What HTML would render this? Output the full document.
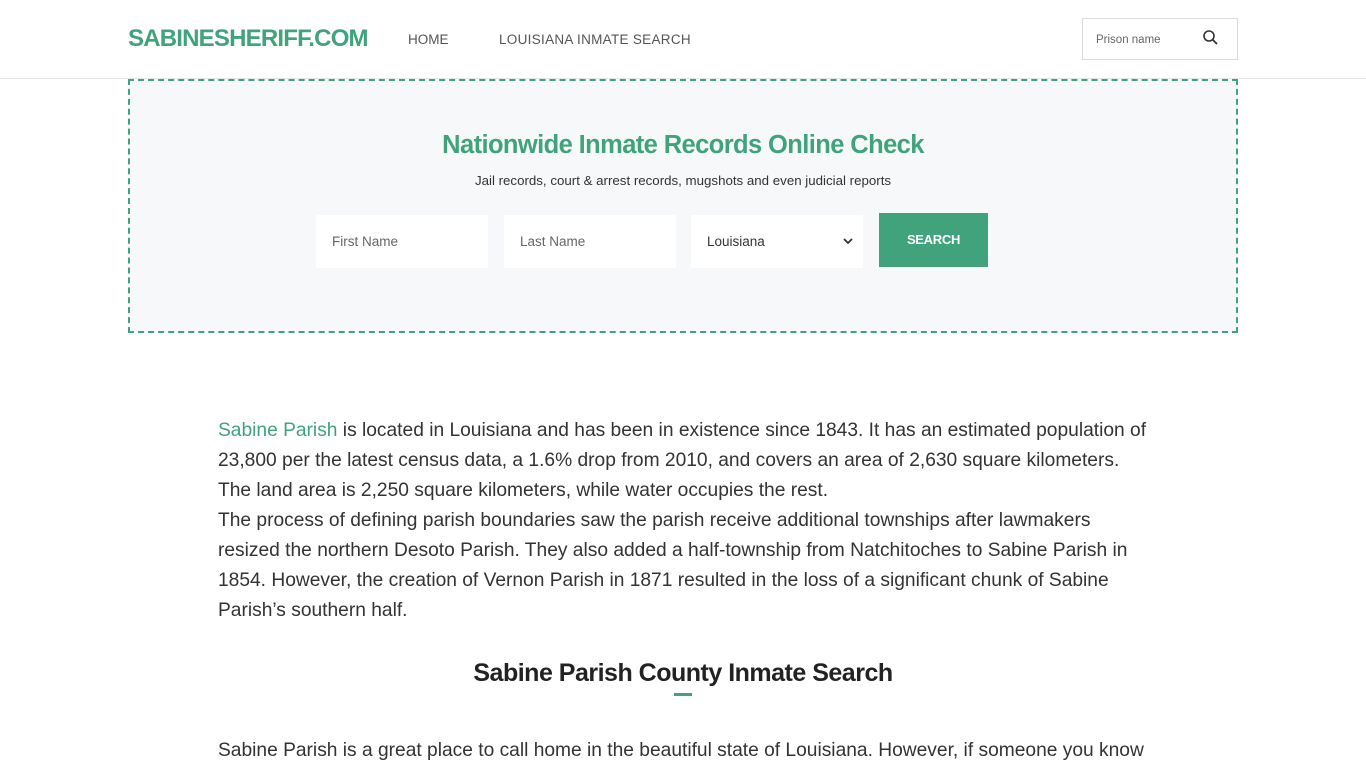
<!DOCTYPE html>
<html><head><meta charset="utf-8"><style>
*{box-sizing:border-box;margin:0;padding:0}
body{width:1366px;height:768px;overflow:hidden;background:#fff;font-family:"Liberation Sans",sans-serif;color:#333}
.hdr{height:79px;border-bottom:1px solid #e6e6e6;position:relative}
.logo{position:absolute;left:128px;top:25px;font-size:24px;font-weight:bold;color:#40a37c;letter-spacing:-0.8px}
.nav{position:absolute;top:32px;font-size:13.5px;color:#555;letter-spacing:0}
.sbox{position:absolute;left:1082px;top:18px;width:156px;height:42px;border:1px solid #ddd;font-size:11.5px;color:#666;padding:15px 0 0 13px}
.box{position:absolute;left:128px;top:79px;width:1110px;height:254px;border:2px dashed #40a37c;background:#f6f8f9}
h1{position:absolute;top:50px;width:100%;text-align:center;color:#40a37c;font-size:25.5px;font-weight:bold;letter-spacing:-0.6px}
.sub{position:absolute;top:92px;width:100%;text-align:center;font-size:13.3px;color:#333}
.in{position:absolute;top:134px;height:53px;width:172px;background:#fff;font-size:13.5px;color:#666;padding:19px 0 0 16px}
.btn{position:absolute;left:749px;top:132px;width:109px;height:54px;background:#40a37c;color:#fff;font-weight:bold;font-size:13px;text-align:center;padding-top:19px;letter-spacing:-0.3px}
.p{position:absolute;left:218px;top:416px;width:960px;font-size:19.2px;line-height:30px;color:#333;letter-spacing:0}
.p a{color:#40a37c;text-decoration:none}
h2{position:absolute;top:659px;width:100%;text-align:center;font-size:25px;font-weight:bold;color:#222;letter-spacing:-0.5px}
.bar{position:absolute;left:674px;top:693px;width:18px;height:3px;background:#40a37c}
</style></head><body>
<div class="hdr">
<div class="logo">SABINESHERIFF.COM</div>
<div class="nav" style="left:408px">HOME</div>
<div class="nav" style="left:499px;letter-spacing:0.3px">LOUISIANA INMATE SEARCH</div>
<div class="sbox">Prison name
<svg style="position:absolute;left:119px;top:10px" width="17" height="17" viewBox="0 0 17 17"><circle cx="7" cy="7" r="5" fill="none" stroke="#333" stroke-width="1.6"/><path d="M10.7 10.7L15 15" stroke="#333" stroke-width="1.8"/></svg></div>
</div>
<div class="box">
<h1>Nationwide Inmate Records Online Check</h1>
<div class="sub">Jail records, court &amp; arrest records, mugshots and even judicial reports</div>
<div class="in" style="left:186px">First Name</div>
<div class="in" style="left:374px">Last Name</div>
<div class="in" style="left:561px;color:#333">Louisiana<svg style="position:absolute;right:10px;top:23px" width="10" height="7" viewBox="0 0 10 7"><path d="M1 1l4 4 4-4" stroke="#333" stroke-width="1.8" fill="none"/></svg></div>
<div class="btn">SEARCH</div>
</div>
<div class="p"><a>Sabine Parish</a> is located in Louisiana and has been in existence since 1843. It has an estimated population of<br>23,800 per the latest census data, a 1.6% drop from 2010, and covers an area of 2,630 square kilometers.<br>The land area is 2,250 square kilometers, while water occupies the rest.<br>The process of defining parish boundaries saw the parish receive additional townships after lawmakers<br>resized the northern Desoto Parish. They also added a half-township from Natchitoches to Sabine Parish in<br>1854. However, the creation of Vernon Parish in 1871 resulted in the loss of a significant chunk of Sabine<br>Parish’s southern half.</div>
<h2>Sabine Parish County Inmate Search</h2>
<div class="bar"></div>
<div class="p" style="top:736px">Sabine Parish is a great place to call home in the beautiful state of Louisiana. However, if someone you know</div>
</body></html>
